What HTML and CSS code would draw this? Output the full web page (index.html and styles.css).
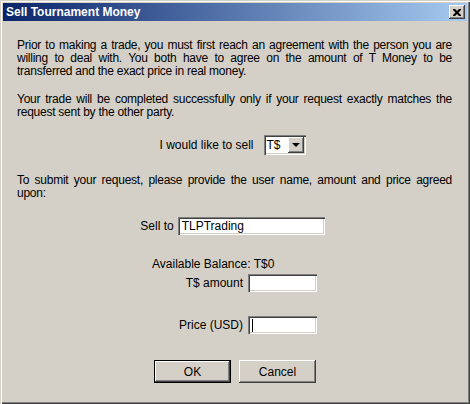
FILE: index.html
```html
<!DOCTYPE html>
<html lang="en">
<head>
    <meta charset="UTF-8" />
    <title>Sell Tournament Money</title>
    <link rel="stylesheet" href="styles.css">
</head>
<body>
<div class="window">
    <div class="title-bar">
        <span class="title">Sell Tournament Money</span>
        <span class="close-btn">
            <svg width="8" height="7" viewBox="0 0 8 7">
                <path d="M0 0h2l2 2 2-2h2v1l-2.5 2.5L8 6v1H6L4 5 2 7H0V6l2.5-2.5L0 1z" fill="#000"/>
            </svg>
        </span>
    </div>

    <div class="content">
        <p class="text">Prior to making a trade, you must first reach an agreement with the person you are willing to deal with. You both have to agree on the amount of T Money to be transferred and the exact price in real money.</p>
        <p class="text">Your trade will be completed successfully only if your request exactly matches the request sent by the other party.</p>

        <div class="sell-row">
            <span class="sell-label">I would like to sell</span>
            <span class="select">
                <span class="select-value">T$</span>
                <span class="select-arrow"><span class="tri"></span></span>
            </span>
        </div>

        <p class="text">To submit your request, please provide the user name, amount and price agreed upon:</p>

        <div class="sellto-row">
            <span>Sell to</span>
            <span class="field wide">TLPTrading</span>
        </div>

        <div class="amounts">
            <div class="balance">Available Balance: T$0</div>
            <div class="amount-grid">
                <span class="lbl">T$ amount</span>
                <span class="field small"></span>
                <span class="lbl">Price (USD)</span>
                <span class="field small"><span class="caret"></span></span>
            </div>
        </div>

        <div class="buttons">
            <span class="btn default">OK</span>
            <span class="btn">Cancel</span>
        </div>
    </div>
</div>
</body>
</html>
```

FILE: styles.css
```css
html, body {
    margin: 0;
    padding: 0;
}

body {
    width: 470px;
    height: 404px;
    font-family: "Liberation Sans", Arial, sans-serif;
    font-size: 12px;
    color: #000;
    background: #d4d0c8;
}

.window {
    width: 470px;
    height: 404px;
    box-sizing: border-box;
    padding: 3px;
    background: #d4d0c8;
    box-shadow: inset 1px 1px 0 #d4d0c8, inset 2px 2px 0 #fff,
                inset -1px -1px 0 #404040, inset -2px -2px 0 #808080;
}

.title-bar {
    height: 18px;
    display: flex;
    align-items: center;
    justify-content: space-between;
    padding: 0 2px 0 3px;
    background: linear-gradient(to right, #0a246a, #a6caf0);
}

.title {
    color: #fff;
    font-weight: bold;
    font-size: 12px;
}

.close-btn {
    width: 16px;
    height: 14px;
    box-sizing: border-box;
    display: flex;
    align-items: center;
    justify-content: center;
    background: #d4d0c8;
    box-shadow: inset -1px -1px 0 #404040, inset 1px 1px 0 #fff,
                inset -2px -2px 0 #808080;
}

.content {
    padding: 18px 15px 0 14px;
}

.text {
    margin: 0 0 15px;
    line-height: 13px;
    text-align: justify;
    letter-spacing: -0.25px;
}

.sell-row {
    display: flex;
    align-items: center;
    justify-content: center;
    gap: 10px;
    margin: 16px 0 19px;
    padding-right: 4px;
}

.select {
    display: flex;
    width: 42px;
    height: 20px;
    box-sizing: border-box;
    padding: 2px;
    background: #fff;
    box-shadow: inset 1px 1px 0 #808080, inset 2px 2px 0 #404040,
                inset -1px -1px 0 #fff, inset -2px -2px 0 #d4d0c8;
}

.select-value {
    flex: 1;
    padding-left: 1px;
    line-height: 16px;
}

.select-arrow {
    width: 16px;
    height: 16px;
    box-sizing: border-box;
    display: flex;
    align-items: center;
    justify-content: center;
    background: #d4d0c8;
    box-shadow: inset -1px -1px 0 #404040, inset 1px 1px 0 #fff,
                inset -2px -2px 0 #808080;
}

.tri {
    width: 0;
    height: 0;
    border-left: 4px solid transparent;
    border-right: 4px solid transparent;
    border-top: 4px solid #000;
}

.sellto-row {
    display: flex;
    align-items: center;
    justify-content: center;
    gap: 4px;
    margin-top: 17px;
    padding-right: 4px;
}

.field {
    display: inline-flex;
    align-items: center;
    height: 18px;
    box-sizing: border-box;
    padding: 0 4px;
    background: #fff;
    box-shadow: inset 1px 1px 0 #808080, inset 2px 2px 0 #404040,
                inset -1px -1px 0 #fff, inset -2px -2px 0 #d4d0c8;
}

.field.wide {
    width: 147px;
}

.field.small {
    width: 69px;
}

.caret {
    width: 1px;
    height: 13px;
    background: #000;
}

.amounts {
    margin: 22px 0 0 135px;
}

.balance {
    line-height: 14px;
}

.amount-grid {
    display: grid;
    grid-template-columns: 91px 69px;
    column-gap: 5px;
    row-gap: 24px;
    align-items: center;
    margin-top: 3px;
}

.lbl {
    text-align: right;
}

.buttons {
    display: flex;
    justify-content: center;
    gap: 8px;
    margin-top: 26px;
    padding-left: 1px;
}

.btn {
    width: 77px;
    height: 23px;
    box-sizing: border-box;
    display: flex;
    align-items: center;
    justify-content: center;
    background: #d4d0c8;
    box-shadow: inset -1px -1px 0 #404040, inset 1px 1px 0 #fff,
                inset -2px -2px 0 #808080;
}

.btn.default {
    box-shadow: inset 0 0 0 1px #000, inset -2px -2px 0 #404040,
                inset 2px 2px 0 #fff, inset -3px -3px 0 #808080;
}
```
